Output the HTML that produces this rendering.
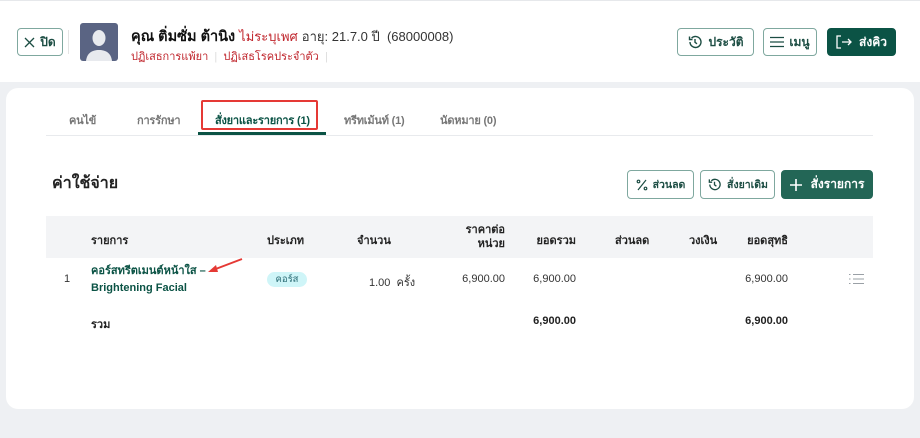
<!DOCTYPE html>
<html><head><meta charset="utf-8"><style>
*{margin:0;padding:0;box-sizing:border-box}
body{width:920px;height:438px;background:#eef0f3;font-family:"Liberation Sans","Noto Sans CJK SC",sans-serif;color:#222;position:relative;overflow:hidden}
.a{position:absolute;white-space:nowrap}
.hdr{position:absolute;left:0;top:0;width:920px;height:82px;background:#fff;border-top:1px solid #e6e8eb}
.btn{position:absolute;border:1px solid #7fa89f;border-radius:4px;background:#fff;color:#1c4d43;font-size:12px;font-weight:bold;display:flex;align-items:center;justify-content:center;gap:5px}
.card{position:absolute;left:6px;top:88px;width:908px;height:321px;background:#fff;border-radius:12px}
.tab{position:absolute;top:111px;font-size:11px;font-weight:bold;color:#777;letter-spacing:-0.2px}
.th{position:absolute;font-size:11px;font-weight:bold;color:#222}
.td{position:absolute;font-size:11px;color:#333}
</style></head><body>
<div class="hdr">
  <div class="btn" style="left:17px;top:27px;width:46px;height:28px;"><svg width="11" height="11" viewBox="0 0 11 11"><path d="M1 1L10 10M10 1L1 10" stroke="#1c4d43" stroke-width="1.3"/></svg>ปิด</div>
  <div class="a" style="left:68px;top:29px;width:1px;height:24px;background:#e4e4e4"></div>
  <div class="a" style="left:80px;top:22px;width:38px;height:38px;background:#5a6483;border-radius:3px;overflow:hidden">
    <svg width="38" height="38" viewBox="0 0 38 38"><ellipse cx="19" cy="15" rx="6.5" ry="8" fill="#e8eaee"/><path d="M6 38C7 30 12 27 19 27C26 27 31 30 32 38Z" fill="#e8eaee"/></svg>
  </div>
  <div class="a" style="left:131px;top:24px;font-size:14.5px;"><b style="color:#111">คุณ ติ่มซั่ม ต้านิง</b> <span style="color:#c0262d;font-size:13px">ไม่ระบุเพศ</span> <span style="font-size:13px;color:#333">อายุ: 21.7.0 ปี &nbsp;(68000008)</span></div>
  <div class="a" style="left:131px;top:46px;font-size:11px;color:#c0262d">ปฏิเสธการแพ้ยา <span style="color:#ddd">&nbsp;|&nbsp;</span> ปฏิเสธโรคประจำตัว <span style="color:#ddd">&nbsp;|</span></div>
  <div class="btn" style="left:677px;top:27px;width:77px;height:28px;"><svg width="16" height="16" viewBox="0 0 16 16" fill="none" stroke="#1c4d43" stroke-width="1.4"><path d="M3 8A5.5 5.5 0 1 0 4.6 4.1"/><path d="M2.5 2.5V5.5H5.5"/><path d="M8 5V8.3L10 9.8"/></svg>ประวัติ</div>
  <div class="btn" style="left:763px;top:27px;width:54px;height:28px;"><svg width="14" height="12" viewBox="0 0 14 12"><path d="M0 1.5H14M0 6H14M0 10.5H14" stroke="#1c4d43" stroke-width="1.3"/></svg>เมนู</div>
  <div class="btn" style="left:827px;top:27px;width:69px;height:28px;background:#0b5345;border-color:#0b5345;color:#fff"><svg width="18" height="14" viewBox="0 0 18 14" fill="none" stroke="#fff" stroke-width="1.3"><path d="M5 1H1V13H5"/><path d="M6 7H15M12 4L15 7L12 10"/></svg>ส่งคิว</div>
</div>
<div class="card">
</div>
<div class="a" style="left:46px;top:135px;width:827px;height:1px;background:#e8eaed"></div>
<div class="tab" style="left:69px">คนไข้</div>
<div class="tab" style="left:137px">การรักษา</div>
<div class="tab" style="left:215px;color:#0b5345">สั่งยาและรายการ (1)</div>
<div class="tab" style="left:344px">ทรีทเม้นท์ (1)</div>
<div class="tab" style="left:440px">นัดหมาย (0)</div>
<div class="a" style="left:198px;top:132px;width:128px;height:3px;background:#0b5345"></div>
<div class="a" style="left:201px;top:100px;width:117px;height:30px;border:2px solid #e53935;border-radius:2px"></div>

<div class="a" style="left:52px;top:171px;font-size:16px;font-weight:bold;color:#222">ค่าใช้จ่าย</div>
<div class="btn" style="left:627px;top:170px;width:67px;height:29px;font-size:10.5px"><svg width="12" height="12" viewBox="0 0 12 12" fill="none" stroke="#1c4d43" stroke-width="1.2"><path d="M10 1L2 11"/><circle cx="2.5" cy="2.5" r="1.3"/><circle cx="9.5" cy="9.5" r="1.3"/></svg>ส่วนลด</div>
<div class="btn" style="left:700px;top:170px;width:75px;height:29px;font-size:10.5px"><svg width="15" height="15" viewBox="0 0 16 16" fill="none" stroke="#1c4d43" stroke-width="1.4"><path d="M3 8A5.5 5.5 0 1 0 4.6 4.1"/><path d="M2.5 2.5V5.5H5.5"/><path d="M8 5V8.3L10 9.8"/></svg>สั่งยาเดิม</div>
<div class="btn" style="left:781px;top:170px;width:92px;height:29px;background:#236656;border-color:#236656;color:#fff;gap:9px"><svg width="12" height="12" viewBox="0 0 12 12"><path d="M6 0V12M0 6H12" stroke="#fff" stroke-width="1.6"/></svg>สั่งรายการ</div>

<div class="a" style="left:46px;top:216px;width:827px;height:42px;background:#f3f4f6"></div>
<div class="th" style="left:91px;top:231px">รายการ</div>
<div class="th" style="left:267px;top:231px">ประเภท</div>
<div class="th" style="left:357px;top:231px">จำนวน</div>
<div class="th" style="left:460px;top:223px;width:45px;text-align:right;line-height:14px">ราคาต่อ<br>หน่วย</div>
<div class="th" style="left:520px;top:231px;width:56px;text-align:right">ยอดรวม</div>
<div class="th" style="left:615px;top:231px">ส่วนลด</div>
<div class="th" style="left:689px;top:231px">วงเงิน</div>
<div class="th" style="left:730px;top:231px;width:58px;text-align:right">ยอดสุทธิ</div>

<div class="td" style="left:64px;top:273px">1</div>
<div class="a" style="left:91px;top:263px;font-size:11px;font-weight:bold;color:#0b5345;line-height:17px">คอร์สทรีตเมนต์หน้าใส –<br>Brightening Facial</div>
<svg class="a" style="left:205px;top:256px" width="40" height="20" viewBox="0 0 40 20"><path d="M37 3L8 14" stroke="#e53935" stroke-width="2"/><path d="M3 16L11 9L13 16Z" fill="#e53935"/></svg>
<div class="a" style="left:267px;top:272px;width:40px;height:15px;background:#cff5f8;border-radius:8px;font-size:9.5px;color:#2a6b74;text-align:center;line-height:15px">คอร์ส</div>
<div class="td" style="left:369px;top:273px">1.00 &nbsp;ครั้ง</div>
<div class="td" style="left:450px;top:273px;width:55px;text-align:right">6,900.00</div>
<div class="td" style="left:520px;top:273px;width:56px;text-align:right">6,900.00</div>
<div class="td" style="left:730px;top:273px;width:58px;text-align:right">6,900.00</div>
<svg class="a" style="left:849px;top:273px" width="15" height="12" viewBox="0 0 15 12" stroke="#9aa0a6" stroke-width="1"><path d="M0 1.5H1.5M0 6H1.5M0 10.5H1.5M4 1.5H15M4 6H15M4 10.5H15"/></svg>

<div class="th" style="left:91px;top:315px">รวม</div>
<div class="th" style="left:520px;top:315px;width:56px;text-align:right">6,900.00</div>
<div class="th" style="left:730px;top:315px;width:58px;text-align:right">6,900.00</div>
</body></html>
